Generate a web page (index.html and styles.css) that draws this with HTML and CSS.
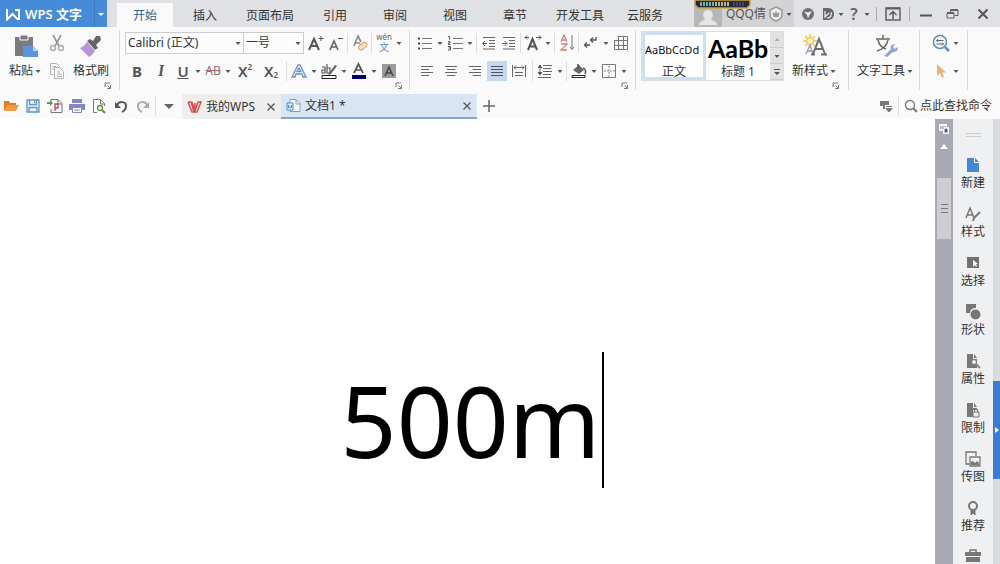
FILE: index.html
```html
<!DOCTYPE html>
<html lang="zh-CN">
<head>
<meta charset="utf-8">
<title>WPS 文字</title>
<link rel="stylesheet" href="styles.css">
</head>
<body>
<svg class="defs" aria-hidden="true">
  <symbol id="caret" viewBox="0 0 10 10"><path d="M2.500 4h5L5 7z" fill="#555"/></symbol>
  <symbol id="launch" viewBox="0 0 8 8"><path d="M1 5V1h5M3 6.500h3.500V3M3.500 3.500l3 3" fill="none" stroke="#777"/></symbol>
  <symbol id="cross" viewBox="0 0 10 10"><path d="M1.500 1.500l7 7M8.500 1.500l-7 7" stroke="#555" stroke-width="1.300"/></symbol>
</svg>

<header class="titlebar">
  <button class="brand" type="button">
    <svg width="16" height="14" viewBox="0 0 16 14"><path d="M2 2v10.500l5.500-5.500 5 5H14V3h-4" fill="none" stroke="#fff" stroke-width="2"/></svg>
    <span>WPS 文字</span>
  </button>
  <button class="brand-more" type="button" aria-label="菜单"><svg width="10" height="10" viewBox="0 0 10 10"><path d="M2 4h6L5 7z" fill="#fff"/></svg></button>
  <nav class="tabs">
    <button type="button" class="tab active">开始</button>
    <button type="button" class="tab">插入</button>
    <button type="button" class="tab wide">页面布局</button>
    <button type="button" class="tab">引用</button>
    <button type="button" class="tab">审阅</button>
    <button type="button" class="tab">视图</button>
    <button type="button" class="tab">章节</button>
    <button type="button" class="tab wide">开发工具</button>
    <button type="button" class="tab">云服务</button>
  </nav>
  <div class="title-right">
    <button class="user" type="button">
      <span class="avatar"><svg width="20" height="18" viewBox="0 0 20 18"><path d="M10 1a4.500 5 0 0 1 3 9c1 2 6 2 6 6H1c0-4 5-4 6-6a4.500 5 0 0 1 3-9z" fill="#e6e6e6"/></svg></span>
      <span class="user-name">QQQ倩</span>
      <svg width="16" height="16" viewBox="0 0 16 16"><path d="M8 1l6 3v5c0 3-3 5-6 6-3-1-6-3-6-6V4z" fill="#ececec" stroke="#999" stroke-width="1.500"/><path d="M4.500 6l2 1.500L8 5l1.500 2.500 2-1.500-.8 5H5.300z" fill="#999"/></svg>
      <svg width="10" height="10"><use href="#caret"/></svg>
    </button>
    <button class="cell c20 skin" type="button" aria-label="皮肤"><svg width="14" height="14" viewBox="0 0 14 14"><circle cx="7" cy="7" r="6" fill="#707070"/><path d="M3 4.500l4 1 4-1.500-2.500 4L7 11.500 6 8z" fill="#eee"/></svg></button>
    <button class="cell c20" type="button" aria-label="稻壳"><svg width="14" height="14" viewBox="0 0 14 14"><path d="M2 1h5c8 0 8 12 0 12H2z" fill="#666"/><path d="M4 4v6l4-4M6 11c4 0 5-3 4-6" fill="none" stroke="#eee" stroke-width="1.200"/></svg></button>
    <svg width="8" height="10" viewBox="2 0 8 10"><use href="#caret" width="10" height="10"/></svg>
    <button class="cell c16 help" type="button">?</button>
    <svg width="10" height="10"><use href="#caret"/></svg>
    <i class="sep"></i>
    <button class="cell c24" type="button" aria-label="功能区"><svg width="16" height="16" viewBox="0 0 16 16"><path d="M1 2h14v12H1zM8 13V6M4.500 9L8 5.500 11.500 9" fill="none" stroke="#606060" stroke-width="1.500"/><path d="M1 1.500h14v2H1z" fill="#606060"/></svg></button>
    <i class="sep"></i>
    <button class="cell c24" type="button" aria-label="最小化"><svg width="12" height="12"><path d="M0 7.500h12" stroke="#555" stroke-width="2"/></svg></button>
    <button class="cell c28" type="button" aria-label="还原"><svg width="13" height="12" viewBox="0 0 13 12"><path d="M1 5h7v5H1zM4.500 4V2H12v5.500H8.500" fill="none" stroke="#606060"/><path d="M1 5h7M4.500 2H12" stroke="#606060" stroke-width="2"/></svg></button>
    <button class="cell close" type="button" aria-label="关闭"><svg width="12" height="12" viewBox="0 0 12 12"><path d="M1.500 1.500l9 9M10.500 1.500l-9 9" stroke="#555" stroke-width="2"/></svg></button>
    <svg class="meter" width="57" height="9" viewBox="0 0 57 9"><path d="M1 0v5l3 3h49l3-3V0z" fill="#28283a" stroke="#c9a44a" stroke-width="1.500"/><path d="M6 4h14" stroke="#5fb8a8" stroke-width="4" stroke-dasharray="2 1"/><path d="M21 4h15" stroke="#b5bd60" stroke-width="4" stroke-dasharray="2 1"/><path d="M39 4h12" stroke="#404a68" stroke-width="4" stroke-dasharray="2 1"/></svg>
  </div>
</header>

<section class="ribbon">
  <div class="group clipboard">
    <button class="big" type="button">
      <svg width="26" height="24" viewBox="0 0 26 24"><path d="M2 3h5V1h8v2h5v10h-9v9H2z" fill="#7b7b7b"/><path d="M7 1h8v5H7z" fill="#7b7b7b" stroke="#fafafa"/><path d="M10 12h10l5 5v6H10z" fill="#5b93dc"/><path d="M20 12v5h5" fill="#b8d2f2"/></svg>
      <span class="label">粘贴<svg width="10" height="10"><use href="#caret"/></svg></span>
    </button>
    <div class="rows">
      <button class="cell c20" type="button" aria-label="剪切"><svg width="16" height="18" viewBox="0 0 16 18"><path d="M4 1l6 11M12 1L6 12" stroke="#959595" stroke-width="1.600"/><g fill="none" stroke="#adadad" stroke-width="1.500"><circle cx="4" cy="14" r="2.500"/><circle cx="12" cy="14" r="2.500"/></g></svg></button>
      <button class="cell c20" type="button" aria-label="复制"><svg width="16" height="18" viewBox="0 0 16 18"><path d="M4.500 12.500h-3v-11h6l3 3M5.500 5.500h5l4 4v7h-9zM3 4.500h4M3 7h2M8 10h3M8 12h5M8 14.500h5" fill="none" stroke="#b2b2b2"/></svg></button>
    </div>
    <button class="big brush" type="button">
      <svg width="24" height="24" viewBox="0 0 24 24"><path d="M17 2l4 0 1 4-5 5 2 3-3 2-8-9 3-2 3 2z" fill="#666"/><path d="M8 8l8 9c-2 3-4 5-6 6L1 14c3-1 5-3 7-6z" fill="#b793dd"/></svg>
      <span class="label">格式刷</span>
    </button>
    <button class="launcher" type="button" aria-label="剪贴板"><svg width="8" height="8"><use href="#launch"/></svg></button>
  </div>

  <div class="group font">
    <div class="row">
      <label class="combo family"><select aria-label="字体"><option>Calibri (正文)</option></select><svg width="10" height="10"><use href="#caret"/></svg></label>
      <label class="combo size"><select aria-label="字号"><option>一号</option></select><svg width="10" height="10"><use href="#caret"/></svg></label>
      <button class="cell c20 lead" type="button" aria-label="增大字号"><svg width="18" height="18" viewBox="0 0 18 18"><path d="M2 16L7 5l5 11M4 12h6" fill="none" stroke="#555" stroke-width="2"/><path d="M11.500 4.500h5M14 2v5" stroke="#555"/></svg></button>
      <button class="cell c20" type="button" aria-label="减小字号"><svg width="18" height="18" viewBox="0 0 18 18"><path d="M3 16L7 7l4 9M4 13h6" fill="none" stroke="#666" stroke-width="1.700"/><path d="M11 4.500h5" stroke="#555"/></svg></button>
      <i class="sep"></i>
      <button class="cell c20" type="button" aria-label="清除格式"><svg width="18" height="18" viewBox="0 0 18 18"><path d="M3 12L7 2l3 6M5 9h4" fill="none" stroke="#8b8b98" stroke-width="1.700"/><rect x="7" y="10" width="9" height="5" rx="2" transform="rotate(-40 11 12)" fill="#f6dfc0" stroke="#dca366"/></svg></button>
      <i class="sep"></i>
      <button class="cell c20 pinyin" type="button" aria-label="拼音指南"><span>wén</span><b>文</b></button>
      <svg width="10" height="10"><use href="#caret"/></svg>
    </div>
    <div class="row">
      <button class="cell c24 glyph bold" type="button">B</button>
      <button class="cell c24 glyph italic" type="button">I</button>
      <button class="cell c20 glyph under" type="button">U</button>
      <svg width="10" height="10"><use href="#caret"/></svg>
      <button class="cell c20 strike" type="button">AB</button>
      <svg width="10" height="10"><use href="#caret"/></svg>
      <button class="cell c24 glyph" type="button">X<sup>2</sup></button>
      <button class="cell c28 glyph" type="button">X<sub>2</sub></button>
      <i class="sep"></i>
      <button class="cell c20" type="button" aria-label="文字效果"><svg width="18" height="18" viewBox="0 0 18 18"><path d="M2 15L8 3h2l6 12h-3l-1-3H6l-1 3zM7 9.500h4L9 6z" fill="#eef4fc" stroke="#6c93bf" stroke-width="1.300"/></svg></button>
      <svg width="10" height="10"><use href="#caret"/></svg>
      <button class="cell c20" type="button" aria-label="突出显示"><svg width="18" height="18" viewBox="0 0 18 18"><path d="M2 5h3v6H2V8h3M7 2v9h3V6H7" fill="none" stroke="#555" stroke-width="1.200"/><path d="M9 11l6-8 2 1-6 8-3 1z" fill="#666"/><path d="M2 13.500h14v3H2z" fill="#fff" stroke="#222"/></svg></button>
      <svg width="10" height="10"><use href="#caret"/></svg>
      <button class="cell c20" type="button" aria-label="字体颜色"><svg width="18" height="18" viewBox="0 0 18 18"><path d="M4 11L8.500 2 13 11M6 8h5" fill="none" stroke="#555" stroke-width="1.700"/><path d="M2 13h14v4H2z" fill="#00006e"/></svg></button>
      <svg width="10" height="10"><use href="#caret"/></svg>
      <button class="cell c20" type="button" aria-label="字符底纹"><svg width="16" height="16" viewBox="0 0 16 16"><path d="M1 1h14v14H1z" fill="#9c9c9c"/><path d="M4 13L8 4l4 9M5 10h6" fill="none" stroke="#444" stroke-width="1.500"/></svg></button>
    </div>
    <button class="launcher" type="button" aria-label="字体"><svg width="8" height="8"><use href="#launch"/></svg></button>
  </div>

  <div class="group para">
    <div class="row">
      <button class="cell c20" type="button" aria-label="项目符号"><svg width="16" height="16" viewBox="0 0 16 16"><path d="M5 3.500h10M5 8.500h10M5 13.500h10" stroke="#777"/><path d="M1 3.500h2M1 8.500h2M1 13.500h2" stroke="#444" stroke-width="2"/></svg></button>
      <svg width="10" height="10"><use href="#caret"/></svg>
      <button class="cell c20" type="button" aria-label="编号"><svg width="16" height="16" viewBox="0 0 16 16"><path d="M6 3.500h10M6 8.500h10M6 13.500h10" stroke="#777"/><path d="M1 1.500h1.500v3M1 6.500h2V8H1.500v1.500H3.500M1 11.500h2.500V15H1M1.500 13h2" fill="none" stroke="#555"/></svg></button>
      <svg width="10" height="10"><use href="#caret"/></svg>
      <i class="sep"></i>
      <button class="cell c20" type="button" aria-label="减少缩进"><svg width="14" height="14" viewBox="0 0 14 14"><path d="M1 1.500h12M7 4.500h6M7 7.500h6M7 10.500h6M1 13h12M0 7.500h5M3 5L.5 7.500 3 10" fill="none" stroke="#666"/></svg></button>
      <button class="cell c20" type="button" aria-label="增加缩进"><svg width="14" height="14" viewBox="0 0 14 14"><path d="M1 1.500h12M7 4.500h6M7 7.500h6M7 10.500h6M1 13h12M0 7.500h5M2.500 5L5 7.500 2.500 10" fill="none" stroke="#666"/></svg></button>
      <i class="sep"></i>
      <button class="cell c20" type="button" aria-label="中文版式"><svg width="18" height="18" viewBox="0 0 18 18"><path d="M4 16L8.500 5 13 16M6 12.500h5.500" fill="none" stroke="#555" stroke-width="2"/><path d="M1 3.500h4M3 1.500L1 3.500l2 2M12 3.500h5M15 1.500l2 2-2 2" fill="none" stroke="#555"/></svg></button>
      <svg width="10" height="10"><use href="#caret"/></svg>
      <i class="sep"></i>
      <button class="cell c20" type="button" aria-label="排序"><svg width="16" height="18" viewBox="0 0 16 18"><path d="M2 8l3-7 3 7M3 6h4" fill="none" stroke="#cf8377" stroke-width="1.300"/><path d="M2 10h6l-6 6h6" fill="none" stroke="#cf8377" stroke-width="1.300"/><path d="M13 1v14M11 13l2 2.500 2-2.500" fill="none" stroke="#777"/></svg></button>
      <i class="sep"></i>
      <button class="cell c20" type="button" aria-label="显示标记"><svg width="16" height="16" viewBox="0 0 16 16"><path d="M13 2v3H8M10 2.500L7.500 5 10 7.500M1 10h6M4 7.500L1.500 10 4 12.500" fill="none" stroke="#555" stroke-width="1.300"/></svg></button>
      <svg width="10" height="10"><use href="#caret"/></svg>
      <button class="cell c20" type="button" aria-label="插入表格"><svg width="14" height="14" viewBox="0 0 14 14"><path d="M3.500.5h10v13H.5V4M.5 4.500h13M.5 9.500h13M4.500 1v12M9.500 1v12" fill="none" stroke="#777"/></svg></button>
    </div>
    <div class="row">
      <button class="cell c24" type="button" aria-label="左对齐"><svg width="14" height="14"><path d="M1 2.500h12M1 5.500h8M1 8.500h12M1 11.500h8" stroke="#666"/></svg></button>
      <button class="cell c24" type="button" aria-label="居中"><svg width="14" height="14"><path d="M1 2.500h12M3 5.500h8M1 8.500h12M3 11.500h8" stroke="#666"/></svg></button>
      <button class="cell c24" type="button" aria-label="右对齐"><svg width="14" height="14"><path d="M1 2.500h12M5 5.500h8M1 8.500h12M5 11.500h8" stroke="#666"/></svg></button>
      <button class="cell c20 on" type="button" aria-label="两端对齐"><svg width="14" height="14"><path d="M1 2.500h12M1 5.500h12M1 8.500h12M1 11.500h12" stroke="#555"/></svg></button>
      <button class="cell c24" type="button" aria-label="分散对齐"><svg width="16" height="14" viewBox="0 0 16 14"><path d="M1.500 1v12M14.500 1v12M3 3.500h10M5 1.500l-2 2 2 2M11 1.500l2 2-2 2M4 8.500h8M4 11.500h8" fill="none" stroke="#666"/></svg></button>
      <i class="sep"></i>
      <button class="cell c20" type="button" aria-label="行距"><svg width="16" height="16" viewBox="0 0 16 16"><path d="M6 2.500h9M6 5.500h8M6 8.500h9M6 11.500h8M1 14.500h13M3 2v10" stroke="#666"/><path d="M.5 5L3 1.500 5.500 5zM.5 9L3 12.500 5.500 9z" fill="#555"/></svg></button>
      <svg width="10" height="10"><use href="#caret"/></svg>
      <i class="sep"></i>
      <button class="cell c20" type="button" aria-label="底纹"><svg width="18" height="16" viewBox="0 0 18 16"><path d="M3 7l6-5 5 5-5 4z" fill="#666"/><path d="M8 1v4M13 5c3 1 3 4 2 6" fill="none" stroke="#555" stroke-width="1.500"/><path d="M2 12.500h13v2H2z" fill="#fff" stroke="#222"/></svg></button>
      <svg width="10" height="10"><use href="#caret"/></svg>
      <button class="cell c20" type="button" aria-label="边框"><svg width="14" height="14" viewBox="0 0 14 14"><path d="M.5.5h13v13H.5z" fill="none" stroke="#777"/><path d="M7 2v11M2 7h11" stroke="#888" stroke-dasharray="2 1"/></svg></button>
      <svg width="10" height="10"><use href="#caret"/></svg>
    </div>
    <button class="launcher" type="button" aria-label="段落"><svg width="8" height="8"><use href="#launch"/></svg></button>
  </div>

  <div class="group styles">
    <div class="gallery">
      <button class="style chosen" type="button"><span class="sample">AaBbCcDd</span><span>正文</span></button>
      <button class="style" type="button"><span class="sample heading">AaBb</span><span>标题 1</span></button>
      <div class="scroller">
        <button type="button" aria-label="上一行"><svg width="10" height="10" viewBox="0 0 10 10"><path d="M2.500 6h5L5 3z" fill="#aaa"/></svg></button>
        <button type="button" aria-label="下一行"><svg width="10" height="10"><use href="#caret"/></svg></button>
        <button type="button" aria-label="更多样式"><svg width="10" height="10" viewBox="0 0 10 10"><path d="M2 2.500h6" stroke="#555"/><path d="M2 5h6L5 8z" fill="#555"/></svg></button>
      </div>
    </div>
    <button class="big" type="button">
      <svg width="26" height="24" viewBox="0 0 26 24"><path d="M8 0v14M1 7h14M3 2l10 10M13 2L3 12" stroke="#eec65a" stroke-width="1.500"/><circle cx="8" cy="7" r="3.500" fill="#fff3b8" stroke="#e8b949"/><path d="M4 20l4-9 3 9M5 17h5" fill="none" stroke="#8c9bb2" stroke-width="1.300"/><path d="M11 20L17 5l6 15M13 15h8M9 20.500h4M19 20.500h6" fill="none" stroke="#6e6e6e" stroke-width="2"/></svg>
      <span class="label">新样式<svg width="10" height="10"><use href="#caret"/></svg></span>
    </button>
    <button class="launcher" type="button" aria-label="样式"><svg width="8" height="8"><use href="#launch"/></svg></button>
  </div>

  <div class="group tools">
    <button class="big" type="button">
      <svg width="26" height="24" viewBox="0 0 26 24"><path d="M3 5h14M10 1v4M5 6c1 5 5 8 8 9M15 6c-1 6-5 9-11 11" fill="none" stroke="#666" stroke-width="1.500"/><path d="M11 22l7-7c-1-3 1-5 4-5l-2 3 2 2 3-2c0 4-2 5-5 5l-6 5z" fill="#8da9cf"/></svg>
      <span class="label">文字工具<svg width="10" height="10"><use href="#caret"/></svg></span>
    </button>
  </div>

  <div class="group finder">
    <div class="row">
      <button class="cell c20" type="button" aria-label="查找替换"><svg width="18" height="18" viewBox="0 0 18 18"><circle cx="8" cy="8" r="6.500" fill="#f3f8fd" stroke="#5f8db8" stroke-width="1.500"/><path d="M13 13l4 4" stroke="#5f8db8" stroke-width="2.500"/><path d="M4.500 6.500h7M6 5L4.500 6.500 6 8M4.500 10h7M10 8.500l1.500 1.500-1.500 1.500" fill="none" stroke="#666"/></svg></button>
      <svg width="10" height="10"><use href="#caret"/></svg>
    </div>
    <div class="row">
      <button class="cell c20" type="button" aria-label="选择"><svg width="16" height="16" viewBox="0 0 16 16"><path d="M4 1v12l3-3 2 5 2-1-2-4.500h4z" fill="#eeb277"/></svg></button>
      <svg width="10" height="10"><use href="#caret"/></svg>
    </div>
  </div>
</section>

<section class="docbar">
  <div class="quick">
    <button class="cell c22" type="button" aria-label="打开"><svg width="16" height="14" viewBox="0 0 16 14"><path d="M1 12V2h5l1 2h6v2H5z" fill="#dd7f27"/><path d="M5 6h11l-3 6H1z" fill="#f09a42"/></svg></button>
    <button class="cell c22" type="button" aria-label="保存"><svg width="14" height="14" viewBox="0 0 14 14"><path d="M1 1h12v12H1zM3.500 1v4.500h7V1M3 13V8.500h8V13M8.500 2v2" fill="#e9f3fc" stroke="#6096c6" stroke-width="1.300"/></svg></button>
    <button class="cell c22" type="button" aria-label="输出为PDF"><svg width="16" height="16" viewBox="0 0 16 16"><path d="M4 6V1.500h7l4 4v9H4V11M11 2v4h4" fill="none" stroke="#777"/><path d="M8 13V6h3v4H8" fill="none" stroke="#b94a5a" stroke-width="1.300"/><path d="M0 4h3V2l3 3-3 3V6H0z" fill="#6e8e62"/></svg></button>
    <button class="cell c22" type="button" aria-label="打印"><svg width="16" height="14" viewBox="0 0 16 14"><path d="M3 0h10v4H3zM0 5h16v6H0z" fill="#8588bd"/><path d="M3.500 8.500h9v5h-9z" fill="#fff" stroke="#8588bd"/><path d="M5 11h6" stroke="#8588bd"/></svg></button>
    <button class="cell c22" type="button" aria-label="打印预览"><svg width="16" height="16" viewBox="0 0 16 16"><path d="M6 14.500H2.500v-13h7l4 4V8M9.500 2v4h4" fill="none" stroke="#777"/><circle cx="9" cy="10" r="2.500" fill="#e7f3dc" stroke="#649148" stroke-width="1.300"/><path d="M11 12l3 3" stroke="#649148" stroke-width="2"/></svg></button>
    <button class="cell c22" type="button" aria-label="撤销"><svg width="14" height="14" viewBox="0 0 14 14"><path d="M3 6c2-4 9-4 9 1 0 3-2 5-4 6" fill="none" stroke="#555" stroke-width="2"/><path d="M1 3v6h6z" fill="#555"/></svg></button>
    <button class="cell c22" type="button" aria-label="恢复"><svg width="14" height="14" viewBox="0 0 14 14"><path d="M11 6C9 2 2 2 2 7c0 3 2 5 4 6" fill="none" stroke="#aaa" stroke-width="2"/><path d="M13 3v6H7z" fill="#aaa"/></svg></button>
    <i class="sep"></i>
    <button class="cell c22" type="button" aria-label="自定义"><svg width="10" height="10" viewBox="0 0 10 10"><path d="M0 3h10L5 8z" fill="#666"/></svg></button>
  </div>
  <div class="doctab home">
    <svg width="15" height="12" viewBox="0 0 15 12"><path d="M1 1h3l3 10M5 1l3 9 3-9h3l-4 10H5L1 1M8 2v8" fill="none" stroke="#d9504c" stroke-width="1.500"/></svg>
    <span class="name">我的WPS</span>
    <button class="cell" type="button" aria-label="关闭"><svg width="10" height="10"><use href="#cross"/></svg></button>
  </div>
  <div class="doctab current">
    <svg width="15" height="15" viewBox="0 0 15 15"><path d="M4 1.500h6l4 4v8H4z" fill="#f5f9fd" stroke="#869fb9"/><path d="M10 2v4h4" fill="none" stroke="#869fb9"/><path d="M1 5h6v7H1z" fill="#d8e9f9" stroke="#4f90c9"/><path d="M2.500 7v3l1.500-1.500L5.500 10V7" fill="none" stroke="#4f90c9"/></svg>
    <span class="name">文档1 *</span>
    <button class="cell" type="button" aria-label="关闭"><svg width="10" height="10"><use href="#cross"/></svg></button>
  </div>
  <button class="cell c24" type="button" aria-label="新建标签"><svg width="12" height="12"><path d="M0 6h12M6 0v12" stroke="#666" stroke-width="1.500"/></svg></button>
  <div class="command">
    <button class="cell c22" type="button" aria-label="窗口"><svg width="14" height="14" viewBox="0 0 14 14"><path d="M1 2h9v4H6v4H4V7H1z" fill="#777"/><path d="M7 7.500h6M7 9.500h6L10 13z" fill="#777" stroke="#777"/></svg></button>
    <i class="sep"></i>
    <label class="search"><svg width="14" height="14" viewBox="0 0 14 14"><circle cx="6" cy="6" r="4.500" fill="none" stroke="#777" stroke-width="1.300"/><path d="M9 9l4 4" stroke="#777" stroke-width="2"/></svg><input type="text" placeholder="点此查找命令" aria-label="点此查找命令"></label>
  </div>
</section>

<div class="work">
  <main class="page"><p class="text">500m<i class="cursor"></i></p></main>
  <div class="scrollbar">
    <button type="button" aria-label="选项"><svg width="12" height="12" viewBox="0 0 12 12"><path d="M1 1h8v3h2v7H5V8H1z" fill="#f5f5f8"/><path d="M3 3v3M5 3v3M7 3v1M7 9V6h2v3M6 9h4" stroke="#8b8b98"/></svg></button>
    <button type="button" aria-label="向上"><svg width="8" height="5" viewBox="0 0 10 6"><path d="M0 6h10L5 0z" fill="#fff"/></svg></button>
    <div class="thumb"><i></i><i></i><i></i></div>
  </div>
  <aside class="side">
    <div class="grip"></div>
    <button type="button"><svg width="16" height="16" viewBox="0 0 16 16"><path d="M2 1h7v5h5v9H2z" fill="#4788d5"/><path d="M10 1l4 4h-4z" fill="#4788d5"/></svg>新建</button>
    <button type="button"><svg width="16" height="16" viewBox="0 0 16 16"><path d="M1 12L5 2l4 10M2.500 9h5" fill="none" stroke="#777" stroke-width="1.500"/><path d="M8 15l1-3 6-6" fill="none" stroke="#777" stroke-width="2"/></svg>样式</button>
    <button type="button"><svg width="16" height="16" viewBox="0 0 16 16"><path d="M2 2h12v11H2z" fill="#707070"/><path d="M8 5v7l2-2 1 2 1-1-1-2h2z" fill="#fff"/></svg>选择</button>
    <button type="button"><svg width="16" height="16" viewBox="0 0 16 16"><path d="M1 0h10v4C7 4 5 6 5 9H1z" fill="#777"/><circle cx="10.500" cy="10.500" r="5" fill="#777"/></svg>形状</button>
    <button type="button"><svg width="16" height="16" viewBox="0 0 16 16"><path d="M2 1h6v5h4v9H2z" fill="#777"/><path d="M9 1l3 4H9z" fill="#777"/><circle cx="9" cy="9" r="2.500" fill="#eee" stroke="#777"/><path d="M11 11l4 4" stroke="#888" stroke-width="2"/></svg>属性</button>
    <button type="button"><svg width="16" height="16" viewBox="0 0 16 16"><path d="M2 1h6v5h4v2H8v7H2zM9 1l3 4H9z" fill="#777"/><path d="M8 10h6v5H8z" fill="#eee" stroke="#777"/><path d="M9.500 10V7.500h3V10" fill="none" stroke="#777"/></svg>限制</button>
    <button type="button"><svg width="16" height="16" viewBox="0 0 16 16"><path d="M5 13H1V1h10v4M5 6h10v9H5z" fill="none" stroke="#777" stroke-width="1.300"/><path d="M6 14v-3l2-1 2 2 2-2 2 2v2z" fill="#777"/></svg>传图</button>
    <button type="button"><svg width="16" height="16" viewBox="0 0 16 16"><circle cx="8" cy="6" r="4" fill="none" stroke="#777" stroke-width="2"/><path d="M6 10v5l2-2 2 2v-5" fill="#777" stroke="#777"/></svg>推荐</button>
    <button type="button" aria-label="工具箱"><svg width="16" height="16" viewBox="0 0 16 16"><path d="M5 4V2h6v2" fill="none" stroke="#777" stroke-width="1.500"/><path d="M0 4h16v4H0zM1 9h14v5H1z" fill="#777"/></svg></button>
  </aside>
  <div class="edge"><button type="button" aria-label="展开"><svg width="4" height="6"><path d="M0 0v6l4-3z" fill="#fff"/></svg></button></div>
</div>
</body>
</html>
```
FILE: styles.css
```css
* { box-sizing: border-box; }
html, body { height: 100%; }
body {
  margin: 0;
  display: flex;
  flex-direction: column;
  overflow: hidden;
  background: #fafafa;
  color: #333;
  font: 12px/16px "Noto Sans", "Noto Sans CJK SC", sans-serif;
}
button, select, input { font: inherit; color: inherit; border: 0; padding: 0; margin: 0; background: none; }
svg { display: block; flex: none; }
.defs { position: absolute; width: 0; height: 0; }

.cell { display: flex; align-items: center; justify-content: center; height: 20px; flex: none; white-space: nowrap; }
.c16 { width: 16px; }
.c20 { width: 20px; }
.c22 { width: 22px; }
.c24 { width: 24px; }
.c28 { width: 28px; }
.sep { width: 1px; height: 20px; margin: 0 2px 0 1px; background: #ddd; flex: none; }

/* Title bar */
.titlebar { display: flex; height: 27px; flex: none; background: #e0e1e4; }
.brand { display: flex; align-items: center; gap: 4px; width: 94px; padding-left: 5px; background: #458bd8; color: #fff; font-size: 13px; font-weight: 600; white-space: nowrap; }
.brand-more { display: flex; align-items: center; justify-content: center; width: 13px; background: #458bd8; border-left: 1px solid #3a7ac4; }
.tabs { display: flex; align-items: flex-end; padding-left: 10px; }
.tab { width: 60px; height: 24px; padding-top: 2px; }
.tab.wide { width: 70px; }
.tab.active { width: 56px; margin-right: 2px; background: #fafafa; color: #2c6194; }
.title-right { position: relative; display: flex; align-items: center; margin-left: auto; }
.user { display: flex; align-items: center; height: 27px; background: #d3d3d6; color: #555; }
.avatar { display: flex; align-items: flex-end; justify-content: center; width: 28px; height: 27px; background: #b7b7b7; }
.user-name { padding: 0 2px 0 4px; }
.title-right .sep { height: 14px; margin: 0 4px; background: #aaa; }
.skin { margin-left: 4px; }
.help { font-size: 16px; font-weight: 600; color: #666; }
.close { width: 34px; }
.meter { position: absolute; left: 0; top: 0; }

/* Ribbon */
.ribbon { display: flex; flex: none; height: 65px; padding-top: 3px; background: #fafafa; }
.group { position: relative; border-right: 1px solid #d8d8d8; padding: 1px 5px 0; display: flex; flex-direction: column; gap: 4px; height: 60px; flex: none; }
.row { display: flex; align-items: center; height: 24px; }
.launcher { position: absolute; right: 6px; bottom: 0; }
.big { display: flex; flex-direction: column; align-items: center; gap: 5px; padding-top: 3px; }
.label { display: flex; align-items: center; white-space: nowrap; }
.clipboard, .styles { flex-direction: row; align-items: flex-start; }
.clipboard { width: 120px; padding-left: 9px; padding-right: 0; }
.clipboard .rows { display: flex; flex-direction: column; gap: 8px; padding: 2px 2px 0 0; }
.clipboard .launcher { right: 7px; }
.font { width: 290px; }
.para { width: 226px; }
.combo { display: grid; align-items: center; height: 22px; border: 1px solid #ccc; background: #fcfcfc; }
.combo > * { grid-area: 1 / 1; }
.combo select { appearance: none; width: 100%; padding-left: 2px; outline: 0; }
.combo svg { justify-self: end; pointer-events: none; }
.family { width: 119px; }
.size { width: 60px; border-left: 0; }
.lead { margin-left: 2px; }
.pinyin { flex-direction: column; font-size: 8px; line-height: 8px; color: #666; }
.pinyin b { font-size: 10px; line-height: 12px; font-weight: 400; color: #5f85ad; }
.glyph { font-size: 15px; font-weight: 600; color: #555; }
.glyph sup, .glyph sub { font-size: 8px; line-height: 8px; }
.glyph sup { align-self: flex-start; margin-top: 2px; }
.glyph sub { align-self: flex-end; margin-bottom: 2px; }
.bold { font-weight: 700; }
.italic { font-family: "Liberation Serif", serif; font-style: italic; font-size: 16px; }
.under { text-decoration: underline; }
.strike { font-size: 12px; color: #777; text-decoration: line-through #b66; }
.on { background: #c5d9ee; }

.styles { width: 213px; gap: 8px; }
.gallery { display: flex; width: 143px; height: 50px; background: #fff; border: 1px solid #ddd; }
.style { display: flex; flex-direction: column; align-items: center; width: 64px; padding: 0 2px; overflow: hidden; }
.style.chosen { border: 3px solid #cddff1; padding: 0; }
.sample { width: 100%; height: 32px; line-height: 32px; text-align: left; color: #111; white-space: nowrap; }
.chosen .sample { height: 29px; line-height: 29px; font-size: 11px; }
.heading { font-family: Lato, sans-serif; font-size: 25px; font-weight: 700; color: #000; }
.scroller { display: flex; flex-direction: column; width: 13px; margin-left: auto; background: #e2e2e4; }
.scroller button { flex: 1; display: flex; align-items: center; justify-content: center; border-bottom: 1px solid #ccc; }
.styles .launcher { right: 8px; }
.tools { padding-left: 8px; padding-right: 4px; width: 71px; }
.finder { width: 48px; padding-left: 11px; }

/* Document tabs */
.docbar { display: flex; align-items: center; height: 27px; flex: none; background: #fafafa; }
.quick { display: flex; align-items: center; width: 182px; flex: none; }
.doctab { display: flex; align-items: center; gap: 4px; height: 25px; align-self: flex-start; margin-top: 2px; padding: 0 5px; }
.doctab .name { flex: 1; white-space: nowrap; }
.home { width: 99px; background: #eee; }
.current { width: 196px; background: #d9e5f3; border-bottom: 2px solid #86a5c8; }
.command { display: flex; align-items: center; margin-left: auto; padding-right: 4px; }
.search { display: flex; align-items: center; gap: 2px; padding-left: 3px; }
.search input { width: 76px; outline: 0; }
.search input::placeholder { color: #333; opacity: 1; }

/* Work area */
.work { display: flex; flex: 1; min-height: 0; }
.page { flex: 1; background: #fff; display: flex; justify-content: center; }
.text { display: flex; align-items: center; gap: 2px; height: 136px; margin: 233px 0 0 10px; font: 98px/136px "Noto Sans", sans-serif; color: #000; }
.cursor { width: 2px; height: 136px; background: #000; }
.scrollbar { display: flex; flex-direction: column; align-items: center; width: 18px; background: #a9a9b4; padding-top: 3px; }
.scrollbar button { display: flex; align-items: center; justify-content: center; height: 14px; margin-bottom: 3px; }
.thumb { display: flex; flex-direction: column; justify-content: center; align-items: center; gap: 3px; width: 14px; height: 61px; margin-top: 22px; background: #cdcdd2; }
.thumb i { width: 7px; height: 1px; background: #777; }
.side { width: 40px; background: #eff0f2; display: flex; flex-direction: column; align-items: center; overflow: hidden; }
.grip { width: 15px; height: 4px; margin: 14px 0 19px; border: solid #ccc; border-width: 1px 0; flex: none; }
.side button { display: flex; flex-direction: column; align-items: center; justify-content: center; gap: 2px; height: 49px; padding-bottom: 14px; flex: none; }
.side button:last-child { justify-content: flex-start; }
.edge { width: 7px; background: #d9dadd; }
.edge button { display: flex; align-items: center; justify-content: center; width: 7px; height: 98px; margin-top: 262px; background: #3d7bd0; }
```
